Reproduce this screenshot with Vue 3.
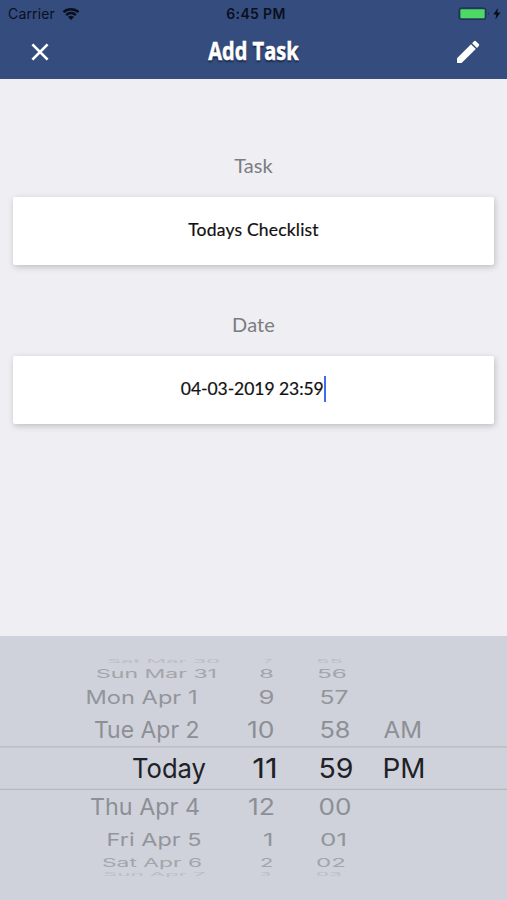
<script setup>
// Each label: text, left edge, drawn width
const rows = [
  { y: 663, cap: 3.6, tone: 'edge', cells: [['Sat Mar 30', 107, 113], ['7', 264, 8], ['55', 316, 27]] },
  { y: 678, cap: 8.5, tone: 'far', cells: [['Sun Mar 31', 96, 121], ['8', 259, 15], ['56', 317, 30]] },
  { y: 703.5, cap: 13.3, tone: 'mid', cells: [['Mon Apr 1', 85.5, 112], ['9', 258.5, 16], ['57', 319.5, 29]] },
  { y: 738, cap: 16.5, tone: 'near', cells: [['Tue Apr 2', 94, 105.5], ['10', 247, 27.5], ['58', 319.5, 31], ['AM', 383.5, 38.5]] },
  { y: 777.7, cap: 20, tone: 'now', cells: [['Today', 132, 74], ['11', 252.3, 25.5], ['59', 318.5, 35], ['PM', 382.5, 43]] },
  { y: 814.7, cap: 16.5, tone: 'near', cells: [['Thu Apr 4', 90, 110], ['12', 248, 27], ['00', 318.5, 33]] },
  { y: 845.8, cap: 13, tone: 'mid', cells: [['Fri Apr 5', 106.5, 95], ['1', 263, 10.5], ['01', 320, 27]] },
  { y: 867, cap: 8.5, tone: 'far', cells: [['Sat Apr 6', 102, 100], ['2', 260, 13.5], ['02', 316, 30]] },
  { y: 876, cap: 3.6, tone: 'edge', cells: [['Sun Apr 7', 103, 103], ['3', 260, 11], ['03', 316, 26]] },
]
</script>

<template>
  <main class="screen">
    <header class="top">
      <div class="status">
        <div class="carrier">
          <span>Carrier</span>
          <svg width="18" height="14" viewBox="0 0 18 14">
            <path d="M1.5 5.2a11 11 0 0 1 15 0M4.1 8.1a7 7 0 0 1 9.8 0" fill="none" stroke="#0a0f1c" stroke-width="2.5" />
            <path d="M9 13.1 6 10.1a4.3 4.3 0 0 1 6 0z" fill="#0a0f1c" />
          </svg>
        </div>
        <span class="clock">6:45 PM</span>
        <svg class="battery" width="46" height="14" viewBox="0 0 46 14">
          <rect x=".9" y=".9" width="27" height="11.6" rx="2.5" fill="#263c62" stroke="#1f3154" />
          <rect x="2.4" y="2.2" width="24.3" height="9" rx="1" fill="#4cd964" />
          <path d="M30 4.8q1.8 1.7 0 3.6z" fill="#1b2a48" />
          <path d="M40 1 35.3 7.5h3.1l-1 4.9 5-6.8h-3.2z" fill="#070b14" />
        </svg>
      </div>
      <nav class="bar">
        <svg class="close" width="20" height="20" viewBox="0 0 20 20">
          <path d="M2.4 2.4 17.6 17.6M17.6 2.4 2.4 17.6" stroke="#fff" stroke-width="2.7" fill="none" />
        </svg>
        <h1><span>Add Task</span></h1>
        <svg class="edit" width="24" height="24" viewBox="0 0 24 24">
          <path d="M1 18.2 15 4.3 19.8 8.9 5.8 22.8Q5.5 23 5 23H1.6Q1 23 1 22.3z" fill="#fff" />
          <path d="M16.1 3.2 18 1.3q1-.9 2 0L22.8 4q.9 1 0 2l-1.9 1.9z" fill="#fff" />
        </svg>
      </nav>
    </header>

    <section class="form">
      <label class="field">
        <span class="label">Task</span>
        <span class="box"><span class="value">Todays Checklist</span></span>
      </label>
      <label class="field">
        <span class="label">Date</span>
        <span class="box"><span class="value date">04-03-2019 23:59</span><i class="caret"></i></span>
      </label>
    </section>

    <section class="picker">
      <svg width="507" height="264" viewBox="0 636 507 264">
        <path d="M0 746.8H507M0 789.4H507" stroke="#b7bac1" stroke-width="1.2" />
        <g v-for="row in rows" :key="row.y" :class="row.tone">
          <text
            v-for="cell in row.cells" :key="cell[0]"
            :x="cell[1]" :y="row.y" :font-size="row.cap / 0.727"
            :textLength="cell[2]" lengthAdjust="spacingAndGlyphs"
          >{{ cell[0] }}</text>
        </g>
      </svg>
    </section>
  </main>
</template>

<style>
body { background: #eeeef3; }
</style>

<style scoped>
.screen {
  width: 507px;
  height: 900px;
  display: flex;
  flex-direction: column;
  overflow: hidden;
  background: #eeeef3;
  font-family: Lato, sans-serif;
}
.top {
  height: 79px;
  flex: none;
  background: #354d7e;
}
.status {
  height: 27px;
  display: grid;
  grid-template-columns: 1fr auto 1fr;
  align-items: center;
  padding: 0 3px 0 8px;
  font: 14px/27px Inter, sans-serif;
  color: #0a0f1c;
}
.carrier {
  display: flex;
  align-items: center;
  gap: 7px;
  letter-spacing: .15px;
}
.clock { font-weight: 600; font-size: 14px; letter-spacing: .35px; }
.battery { justify-self: end; }
.bar {
  height: 50px;
  display: flex;
  align-items: center;
  justify-content: space-between;
  padding: 0 27px 0 30px;
}
h1 {
  margin: 0;
  width: 91px;
  display: flex;
  justify-content: center;
  font: 700 25px/48px "Open Sans", sans-serif;
  color: #fff;
  text-shadow: 0 1.5px 2px #15223f;
}
h1 span {
  white-space: nowrap;
  transform: scaleX(.8);
  -webkit-text-stroke: .5px #fff;
  padding-bottom: 4px;
}
.form {
  height: 557px;
  flex: none;
  padding: 74px 13px 0;
  box-sizing: border-box;
}
.field {
  height: 159px;
  display: flex;
  flex-direction: column;
  align-items: center;
}
.label {
  height: 44px;
  font-size: 20px;
  line-height: 24px;
  color: #7c7c81;
  letter-spacing: .1px;
}
.box {
  width: 481px;
  height: 68px;
  display: flex;
  align-items: center;
  justify-content: center;
  background: #fff;
  border-radius: 2px;
  box-shadow: 1px 2px 6px #00000034;
}
.value {
  padding-bottom: 2px;
  font-size: 17.5px;
  line-height: 26px;
  letter-spacing: .2px;
  color: #111;
  -webkit-text-stroke: .2px #111;
}
.date { letter-spacing: -.05px; }
.caret { width: 2.5px; height: 26px; margin-bottom: 2px; background: #426bf2; }
.picker {
  height: 264px;
  flex: none;
  background: #cfd2da;
}
.picker svg { display: block; font-family: Inter, sans-serif; }
.now { fill: #202126; }
.near { fill: #8c8f95; }
.mid { fill: #92959b; }
.far { fill: #a2a5ab; }
.edge { fill: #bbbec5; }
</style>
